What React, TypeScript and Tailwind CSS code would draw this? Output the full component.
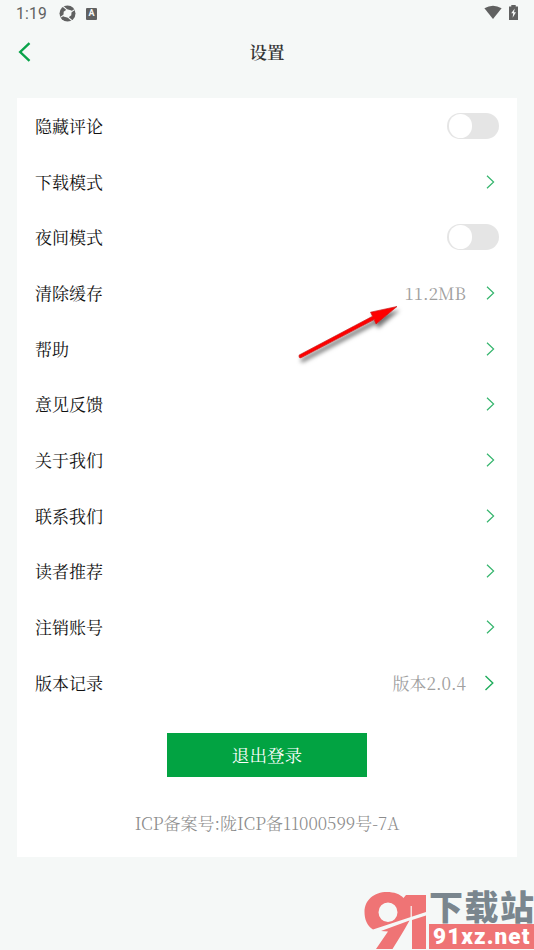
import React from "react";

type Row = { label: string; kind: "toggle" | "link"; value?: string };

const rows: Row[] = [
  { label: "隐藏评论", kind: "toggle" },
  { label: "下载模式", kind: "link" },
  { label: "夜间模式", kind: "toggle" },
  { label: "清除缓存", kind: "link", value: "11.2MB" },
  { label: "帮助", kind: "link" },
  { label: "意见反馈", kind: "link" },
  { label: "关于我们", kind: "link" },
  { label: "联系我们", kind: "link" },
  { label: "读者推荐", kind: "link" },
  { label: "注销账号", kind: "link" },
  { label: "版本记录", kind: "link", value: "版本2.0.4" },
];

function StatusBar() {
  return (
    <div className="flex h-7 items-center pl-4 pr-4 text-[#606161]">
      <span className="w-[43px] font-['Roboto',sans-serif] text-[15.6px] leading-7 tracking-[0.2px]">1:19</span>
      <svg className="-mt-px" width="17" height="17" viewBox="0 0 17 17">
        <circle cx="8.5" cy="8.5" r="8" fill="#606161" />
        <path d="M8 4.2 12.6 5.6 12.3 10.2 9 12.8 4.4 11.4 4.7 6.8Z" fill="#f5f8f7" />
        <path d="M4.2 1.5 8 4.8M15.6 4.6 12 7M12.8 15.5 9 12.2M1.4 12.4 5 10" stroke="#f5f8f7" strokeWidth="1.1" />
      </svg>
      <span className="-mt-px ml-[10px] flex h-[12px] w-[11px] items-center justify-center rounded-[1px] bg-[#606161] font-['Roboto',sans-serif] text-[9px] font-bold leading-none text-[#f5f8f7]">
        A
      </span>
      <svg className="-mt-[3px] ml-auto" width="18" height="15" viewBox="0 0 18 15">
        <path d="M.4 3.2Q9-1.8 17.6 3.2L9 14Z" fill="#606161" />
      </svg>
      <svg className="-mt-[3px] ml-[7px]" width="9" height="15" viewBox="0 0 9 15">
        <path d="M0 1.5H2.3V0H6.7V1.5H9V15H0Z" fill="#606161" />
        <path d="M5.7 3.5 2.2 8.3H4.2L3.6 12.7 7 7.3H5Z" fill="#f5f8f7" />
      </svg>
    </div>
  );
}

function Toggle() {
  return (
    <span className="flex h-[26px] w-[52px] items-center rounded-full bg-[#e5e5e5] pl-[1.5px]">
      <span className="h-[23.5px] w-[23.5px] rounded-full bg-white" />
    </span>
  );
}

function Chevron({ large }: { large?: boolean }) {
  return large ? (
    <svg className="mr-[4px]" width="11" height="16" viewBox="0 0 11 16" fill="none">
      <path d="M1.5 1 8.8 8 1.5 15" stroke="#20ad5d" strokeWidth="1.4" />
    </svg>
  ) : (
    <svg className="mr-[4px]" width="9" height="14" viewBox="0 0 9 14" fill="none">
      <path d="M1 .8 7.6 7 1 13.2" stroke="#35b56d" strokeWidth="1.2" />
    </svg>
  );
}

function Watermark() {
  return (
    <div className="absolute bottom-0 right-0 flex h-[62px] w-[170px] items-end">
      <svg className="shrink-0" width="65" height="62" viewBox="10 8 65 62">
        <path
          fillRule="evenodd"
          fill="#ef7475"
          d="M19 49.5C13 46 10.5 39 10.5 32C10.5 20 20 12 33 12C40 12 46 14 49.5 18L52 15H72V32ZM34 22.5A9.5 9.75 0 1 0 34 42A9.5 9.75 0 1 0 34 22.5Z"
        />
        <path fill="#ef7475" d="M27 51 55.5 40.5C50 51 44 60 38.5 69H22L34 51.5ZM58 40 72 35.5V69H58Z" />
        <path d="M57.2 26V40" stroke="#f5f8f7" strokeWidth="1.2" />
      </svg>
      <div className="flex h-[62px] w-[105px] shrink-0 flex-col">
        <div className="flex h-[36px] items-center justify-between whitespace-nowrap font-['Noto_Sans_CJK_SC',sans-serif] text-[34px] font-black leading-[36px] text-[#7a868e]">
          <span>下</span>
          <span>载</span>
          <span>站</span>
        </div>
        <div className="flex h-[25px] items-center bg-[#ef7475] pl-1 font-['Roboto',sans-serif] text-[22.5px] font-black leading-[25px] text-white">
          <span className="tracking-[1.1px]">91xz.net</span>
        </div>
      </div>
    </div>
  );
}

export default function App() {
  return (
    <div className="relative h-[950px] w-[534px] overflow-hidden bg-[#f5f8f7] font-['Noto_Serif_CJK_SC','Noto_Sans_CJK_SC',serif]">
      <StatusBar />
      <header className="flex h-[47px] items-center pl-[18px] pr-[31px]">
        <svg width="13" height="20" viewBox="0 0 13 20" fill="none">
          <path d="M11.5 1.2 2.2 10 11.5 18.8" stroke="#09a34a" strokeWidth="2.4" />
        </svg>
        <h1 className="flex-1 text-center text-[17.5px] font-semibold leading-6 text-[#333]">设置</h1>
      </header>

      <main className="mx-[17px] mt-[23px] h-[759px] bg-white">
        {rows.map((row) => (
          <div key={row.label} className="flex h-[55.7px] items-center pl-[18px] pr-[18px]">
            <span className="text-[17px] font-normal leading-6 text-[#111]">{row.label}</span>
            <span className="ml-auto flex items-center">
              {row.value && (
                <span
                  className={
                    row.value === "11.2MB"
                      ? "mr-[20px] text-[17px] leading-6 text-[#a0a0a0]"
                      : "mr-[18px] text-[17px] font-normal leading-6 text-[#a0a0a0]"
                  }
                >
                  {row.value}
                </span>
              )}
              {row.kind === "toggle" ? <Toggle /> : <Chevron large={row.label === "版本记录"} />}
            </span>
          </div>
        ))}
        <button className="mx-auto mt-[22px] block h-[44px] w-[200px] bg-[#02a342] pt-px text-[17.6px] font-normal text-white">
          退出登录
        </button>
        <p className="mt-[34px] whitespace-nowrap text-center text-[17px] font-light leading-6 text-[#8c8c8c]">
          ICP备案号:陇ICP备11000599号-7A
        </p>
      </main>

      <svg className="absolute left-[290px] top-[295px]" width="120" height="75" viewBox="0 0 120 75">
        <defs>
          <filter id="arrow-shadow" x="-20%" y="-20%" width="150%" height="150%">
            <feDropShadow dx="2" dy="4" stdDeviation="2" floodColor="#000" floodOpacity="0.55" />
          </filter>
        </defs>
        <path filter="url(#arrow-shadow)" d="M107 11.5 86 29 84.2 24.6 11 62.8Q8.5 63.5 9.2 60L82.5 21.3 80.5 17.2Z" fill="#fe0505" stroke="#c01010" strokeWidth="0.6" />
      </svg>
      <Watermark />
    </div>
  );
}
